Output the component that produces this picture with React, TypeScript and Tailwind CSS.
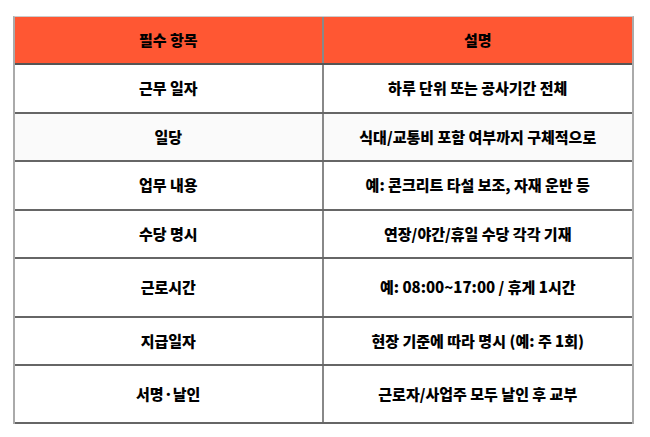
export default function App() {
  const rows: { item: string; desc: string; h: string; bg?: string }[] = [
    { item: "근무 일자", desc: "하루 단위 또는 공사기간 전체", h: "h-[49px]" },
    { item: "일당", desc: "식대/교통비 포함 여부까지 구체적으로", h: "h-[48px]", bg: "bg-[#fafafa]" },
    { item: "업무 내용", desc: "예: 콘크리트 타설 보조, 자재 운반 등", h: "h-[49px]" },
    { item: "수당 명시", desc: "연장/야간/휴일 수당 각각 기재", h: "h-[48px]" },
    { item: "근로시간", desc: "예: 08:00~17:00 / 휴게 1시간", h: "h-[59px]" },
    { item: "지급일자", desc: "현장 기준에 따라 명시 (예: 주 1회)", h: "h-[48px]" },
    { item: "서명·날인", desc: "근로자/사업주 모두 날인 후 교부", h: "h-[58px]" },
  ]
  return (
    <div className="w-[650px] h-[437px] bg-white pt-[16px] pl-[13px]" style={{ fontFamily: '"Noto Sans CJK KR", "Noto Sans", sans-serif' }}>
      <div className="w-[621px] border-l-2 border-r-2 border-[#aaa] border-t border-t-[#ccc] text-[15px] font-extrabold text-black">
        <div className="grid grid-cols-2 h-[48px] bg-[#ff5733] border-b-2 border-[#555]">
          <div className="flex items-center justify-center border-r-2 border-[#888]">필수 항목</div>
          <div className="flex items-center justify-center">설명</div>
        </div>
        {rows.map((r) => (
          <div key={r.item} className={`grid grid-cols-2 border-b-2 border-[#666] ${r.h} ${r.bg ?? "bg-white"}`}>
            <div className="flex items-center justify-center border-r-2 border-[#888]">{r.item}</div>
            <div className="flex items-center justify-center">{r.desc}</div>
          </div>
        ))}
      </div>
    </div>
  )
}
